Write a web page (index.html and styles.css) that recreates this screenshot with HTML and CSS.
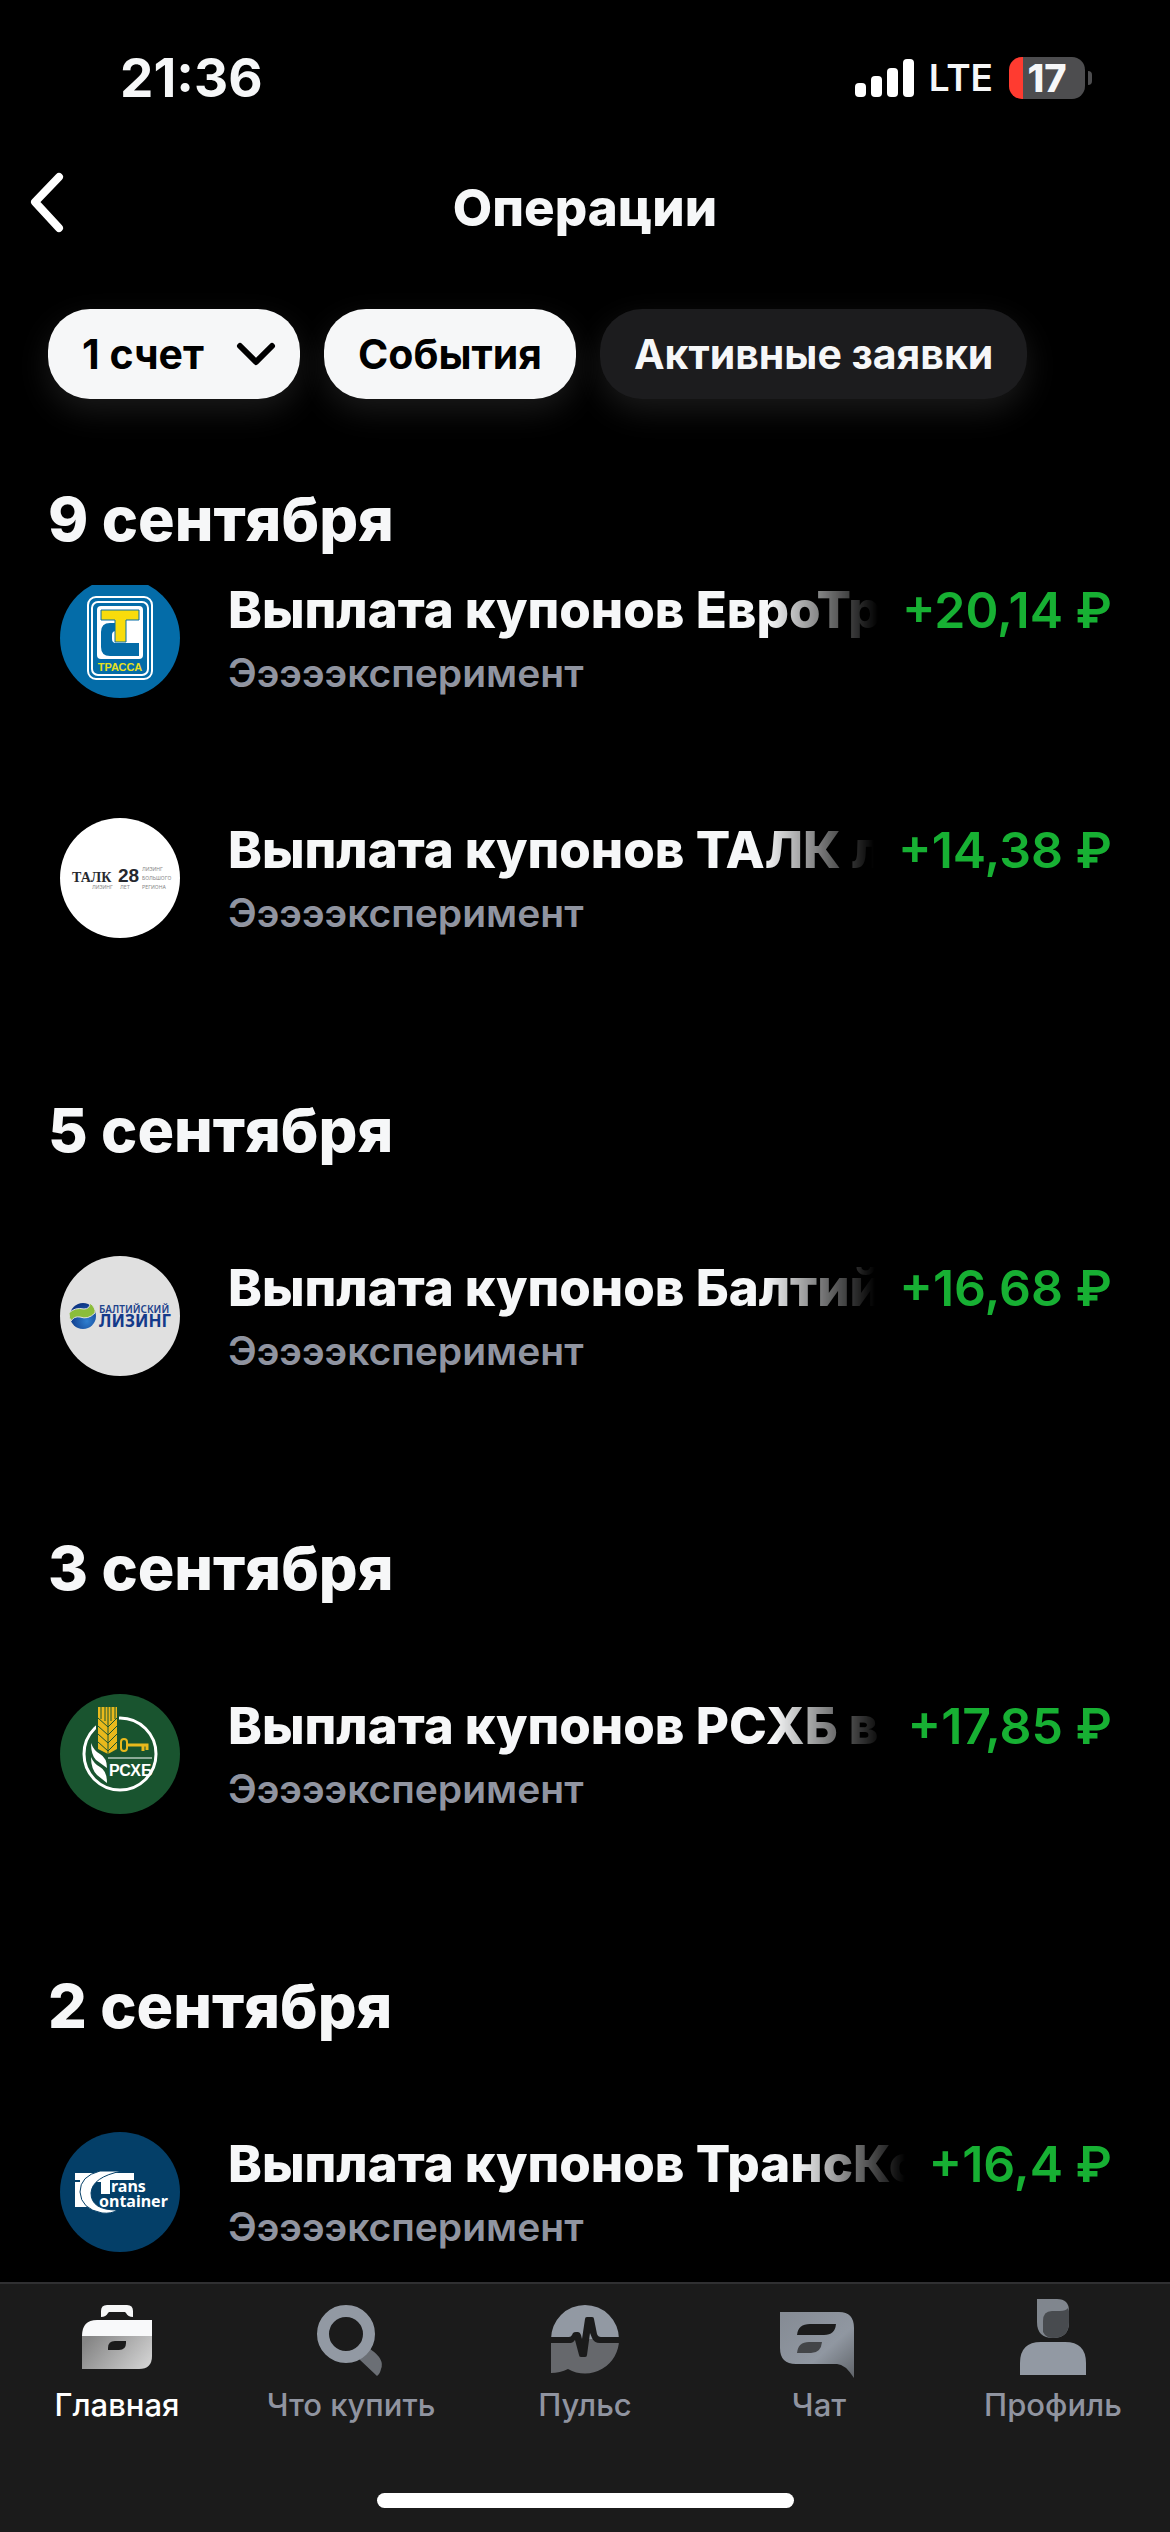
FILE: index.html
```html
<!DOCTYPE html>
<html lang="ru">
<head>
<meta charset="utf-8">
<meta name="viewport" content="width=device-width, initial-scale=1">
<title>Операции</title>
<link rel="stylesheet" href="styles.css">
</head>
<body>
<div class="app">
  <div class="status">
    <time class="status-time">21:36</time>
    <div class="status-right">
      <svg class="signal" viewBox="0 0 60 40" aria-hidden="true">
        <rect x="0" y="25" width="11" height="14" rx="4"/>
        <rect x="16" y="18" width="11" height="21" rx="4"/>
        <rect x="32" y="10" width="11" height="29" rx="4"/>
        <rect x="48" y="1" width="11" height="38" rx="4"/>
      </svg>
      <span class="network">LTE</span>
      <div class="battery"><span class="battery-body">17</span><span class="battery-nub"></span></div>
    </div>
  </div>

  <header class="header">
    <button class="back" type="button" aria-label="Назад">
      <svg viewBox="0 0 40 64" width="40" height="64"><path d="M32 6 8 31 32 57" fill="none" stroke="#fff" stroke-width="8" stroke-linecap="round" stroke-linejoin="round"/></svg>
    </button>
    <h1 class="title">Операции</h1>
  </header>

  <div class="filters">
    <button class="chip chip-on" type="button">1 счет
      <svg viewBox="0 0 40 26" width="40" height="26"><path d="M4 5 20 21 36 5" fill="none" stroke="#000" stroke-width="6" stroke-linecap="round" stroke-linejoin="round"/></svg>
    </button>
    <button class="chip chip-on" type="button">События</button>
    <button class="chip" type="button">Активные заявки</button>
  </div>

  <h2 class="day day-pinned">9 сентября</h2>

  <main class="feed">
    <div class="feed-scroll">
      <article class="row">
        <svg class="logo" viewBox="0 0 120 120" role="img" aria-label="ЕвроТранс">
          <circle cx="60" cy="60" r="60" fill="#046ca8"/>
          <rect x="28" y="19" width="64" height="82" rx="8" fill="none" stroke="#fff" stroke-width="2"/>
          <rect x="32" y="24" width="56" height="73" rx="6" fill="none" stroke="#fff" stroke-width="2"/>
          <rect x="37" y="28" width="46" height="53" rx="4" fill="#fff"/>
          <path d="M79 45H50q-9 0-9 9v15q0 9 9 9h29V65H56q-4 0-4-4v-4q0-4 4-4h23z" fill="#046ca8"/>
          <path d="M66 44h14v9H66z" fill="#fff"/>
          <path d="M41 32h38v10H66v22H55V42H41z" fill="#f8dc0c" stroke="#046ca8" stroke-width="1"/>
          <text x="60" y="93" text-anchor="middle" class="t-sans" font-size="11" fill="#e8e020">ТРАССА</text>
        </svg>
        <div class="row-text">
          <div class="row-line"><span class="name">Выплата купонов ЕвроТр</span><span class="sum">+20,14 ₽</span></div>
          <p class="account">Эээээксперимент</p>
        </div>
      </article>
      <article class="row">
        <svg class="logo" viewBox="0 0 120 120" role="img" aria-label="ТАЛК лизинг">
          <circle cx="60" cy="60" r="60" fill="#fff"/>
          <text x="12" y="64" class="t-serif" font-size="14" fill="#26282e">ТАЛК</text>
          <text x="32" y="71" class="t-thin" font-size="5" fill="#888">ЛИЗИНГ</text>
          <text x="58" y="64" class="t-sans" font-size="19" fill="#26282e">28</text>
          <text x="60" y="71" class="t-thin" font-size="5" fill="#888">ЛЕТ</text>
          <text x="82" y="53" class="t-thin" font-size="5" fill="#888">ЛИЗИНГ</text>
          <text x="82" y="62" class="t-thin" font-size="5" fill="#888">БОЛЬШОГО</text>
          <text x="82" y="71" class="t-thin" font-size="5" fill="#888">РЕГИОНА</text>
        </svg>
        <div class="row-text">
          <div class="row-line"><span class="name">Выплата купонов ТАЛК л</span><span class="sum">+14,38 ₽</span></div>
          <p class="account">Эээээксперимент</p>
        </div>
      </article>

      <h2 class="day">5 сентября</h2>
      <article class="row">
        <svg class="logo" viewBox="0 0 120 120" role="img" aria-label="Балтийский лизинг">
          <defs><radialGradient id="globe" cx=".65" cy=".7" r=".7"><stop offset="0" stop-color="#2f7fd0"/><stop offset="1" stop-color="#0d3584"/></radialGradient></defs>
          <circle cx="60" cy="60" r="60" fill="#e0e0e0"/>
          <circle cx="23" cy="60" r="13" fill="url(#globe)"/>
          <path d="M9 57Q15 51 24 53 30 53 30 47 36 52 35 57 28 64 20 61 14 60 11 65 9 62 9 57z" fill="#8bbd3a" stroke="#e0e0e0" stroke-width="1"/>
          <text x="39" y="57" class="t-noto" font-size="10" fill="#20438c">БАЛТИЙСКИЙ</text>
          <text x="39" y="71" class="t-notob" font-size="17" fill="#143a8a">ЛИЗИНГ</text>
        </svg>
        <div class="row-text">
          <div class="row-line"><span class="name">Выплата купонов Балтий</span><span class="sum">+16,68 ₽</span></div>
          <p class="account">Эээээксперимент</p>
        </div>
      </article>

      <h2 class="day">3 сентября</h2>
      <article class="row">
        <svg class="logo" viewBox="0 0 120 120" role="img" aria-label="РСХБ">
          <circle cx="60" cy="60" r="60" fill="#19542f"/>
          <circle cx="60" cy="60" r="36" fill="none" stroke="#fff" stroke-width="3"/>
          <path d="M36 12h23v45l-11 6-12-6z" fill="#19542f"/>
          <path d="M38 13h19v42l-9 5-10-5z" fill="#e9b91c"/>
          <path d="M41 13v12M45 13v14M51 13v14M55 13v12" stroke="#19542f" stroke-width="1"/>
          <path d="M48 13v47M38 24l10 9 9-9M38 32l10 9 9-9M38 40l10 9 9-9M38 48l10 9 9-9" fill="none" stroke="#19542f" stroke-width="1"/>
          <path d="M31 49Q34 57 40 60 47 64 47 74L36 66Q31 61 31 49zM31 63Q34 70 40 73 47 77 47 89L37 81Q31 75 31 63z" fill="#fff"/>
          <path d="M67 51h20v5M83 51v6" fill="none" stroke="#e9b91c" stroke-width="3"/>
          <rect x="61" y="45" width="6" height="12" rx="3" fill="none" stroke="#e9b91c" stroke-width="2"/>
          <path d="M48 64h44" stroke="#fff" stroke-width="1"/>
          <text x="49" y="82" class="t-sans" font-size="16" fill="#fff">РСХБ</text>
        </svg>
        <div class="row-text">
          <div class="row-line"><span class="name">Выплата купонов РСХБ в</span><span class="sum">+17,85 ₽</span></div>
          <p class="account">Эээээксперимент</p>
        </div>
      </article>

      <h2 class="day">2 сентября</h2>
      <article class="row">
        <svg class="logo" viewBox="0 0 120 120" role="img" aria-label="ТрансКонтейнер">
          <circle cx="60" cy="60" r="60" fill="#043f68"/>
          <path d="M15 41h59v7H50v14h-9V50H28v25H15V50h5v-2h-5z" fill="#fff"/>
          <path d="M62 39H40Q20 44 20 60 21 77 42 81 52 82 57 78 31 78 31 61 32 45 62 39z" fill="#fff" stroke="#043f68" stroke-width="1"/>
          <text x="51" y="60" class="t-notob" font-size="16" fill="#fff">rans</text>
          <text x="39" y="75" class="t-notob" font-size="16" fill="#fff">ontainer</text>
        </svg>
        <div class="row-text">
          <div class="row-line"><span class="name">Выплата купонов ТрансКо</span><span class="sum">+16,4 ₽</span></div>
          <p class="account">Эээээксперимент</p>
        </div>
      </article>
    </div>
  </main>

  <footer class="dock">
    <nav class="tabs">
      <a class="tab tab-active" href="#home">
        <svg viewBox="0 0 96 96" width="96" height="96" aria-hidden="true">
          <defs><linearGradient id="case" x1="0" y1=".3" x2="1" y2=".7"><stop offset="0" stop-color="#858585"/><stop offset="1" stop-color="#d0d0d0"/></linearGradient></defs>
          <path d="M32 25v-6q0-6 6-6h20q6 0 6 6v6q-5 0-7-4l-1-1H40l-1 1q-2 4-7 4z" fill="#f6f7f8"/>
          <path d="M13 44q0-16 15-16h55v16z" fill="#f8f9fa"/>
          <path d="M13 44h70v20q0 13-13 13H13z" fill="url(#case)"/>
          <path d="M39 58v-2q0-7 7-7h11v2q0 7-7 7z" fill="#1b1b1b"/>
        </svg>Главная</a>
      <a class="tab" href="#buy">
        <svg viewBox="0 0 96 96" width="96" height="96" aria-hidden="true">
          <path d="M56 67 67 57Q82 67 78 77q-1 5-4 7z" fill="#6b6f75"/>
          <circle cx="43" cy="42" r="23" fill="none" stroke="#9299a3" stroke-width="12"/>
        </svg>Что купить</a>
      <a class="tab" href="#pulse">
        <svg viewBox="0 0 96 96" width="96" height="96" aria-hidden="true">
          <path d="M14 47a34 34 0 0 1 68 0z" fill="#9299a3"/>
          <path d="M14 47h68a34 34 0 0 1-51 30q-8 4-17 4z" fill="#66686c"/>
          <path d="M14 45h18q2 0 3-2l1-2q1-1 3-1h2q2 0 3 3l1 4 3-20q0-2 2-2h5q2 0 2 2l3 15q1 3 4 3h18v6H63q-6 0-8-5l-2-5-3 22q0 2-2 2h-4q-2 0-2-2l-4-15-1 1q-1 2-5 2H14z" fill="#1b1b1b"/>
        </svg>Пульс</a>
      <a class="tab" href="#chat">
        <svg viewBox="0 0 96 96" width="96" height="96" aria-hidden="true">
          <defs><linearGradient id="bubble" x1="0" y1="0" x2="1" y2="1"><stop offset="0" stop-color="#858b94"/><stop offset=".6" stop-color="#9097a1"/><stop offset="1" stop-color="#606469"/></linearGradient></defs>
          <path d="M9 20h59q15 0 15 16v50Q74 72 66 72H25Q9 72 9 56z" fill="url(#bubble)"/>
          <path d="M26 43q1-11 13-11h26q-1 11-12 11z" fill="#1b1b1b"/>
          <path d="M26 61q1-11 12-11h13q-1 11-11 11z" fill="#434548"/>
        </svg>Чат</a>
      <a class="tab" href="#profile">
        <svg viewBox="0 0 96 96" width="96" height="96" aria-hidden="true">
          <path d="M32 7h20q12 0 12 12v11q0 16-16 16T32 30z" fill="#80868e"/>
          <path d="M38 29q0-10 9-10h8q6 0 8-3l1 3v11q0 16-16 16-7 0-10-6z" fill="#484b4f"/>
          <path d="M15 83V71q0-21 21-21h24q21 0 21 21v12z" fill="#9299a3"/>
        </svg>Профиль</a>
    </nav>
    <div class="home-bar"></div>
  </footer>
</div>
</body>
</html>
```
FILE: styles.css
```css
* { box-sizing: border-box; }

body {
  margin: 0;
  background: #000;
  color: #f6f7f8;
  font-family: Inter, "Liberation Sans", sans-serif;
}

.app {
  display: flex;
  flex-direction: column;
  height: 100vh;
  overflow: hidden;
}

h1, h2, p { margin: 0; }

button {
  border: 0;
  padding: 0;
  background: none;
  color: inherit;
  font: inherit;
}

/* Status bar */
.status {
  display: flex;
  align-items: center;
  justify-content: space-between;
  height: 156px;
  padding: 0 78px 0 120px;
}
.status-time { font-size: 53px; font-weight: 700; line-height: 60px; }
.status-right { display: flex; align-items: center; }
.signal { width: 60px; height: 40px; fill: #fff; margin-right: 14px; }
.network { font-size: 37px; font-weight: 600; line-height: 48px; margin-right: 16px; }
.battery { display: flex; align-items: center; gap: 3px; }
.battery-body {
  width: 76px;
  height: 42px;
  border-radius: 13px;
  background: linear-gradient(90deg, #ff3b30 14px, #4d4d4f 14px);
  font-size: 38px;
  font-weight: 800;
  line-height: 42px;
  text-align: center;
}
.battery-nub { width: 4px; height: 14px; border-radius: 0 4px 4px 0; background: #4d4d4f; }

/* Navigation header */
.header {
  display: grid;
  grid-template-columns: 96px 1fr 96px;
  align-items: center;
  height: 104px;
}
.back { display: flex; padding: 0 0 10px 27px; }
.title { font-size: 51px; font-weight: 800; line-height: 60px; text-align: center; }

/* Filter chips */
.filters {
  display: flex;
  gap: 24px;
  padding: 49px 48px 0;
}
.chip {
  display: flex;
  align-items: center;
  gap: 32px;
  height: 90px;
  padding: 0 34px;
  border-radius: 42px;
  background: #1c1c1e;
  box-shadow: 0 12px 32px rgba(255, 255, 255, .1);
  font-size: 41px;
  font-weight: 700;
  white-space: nowrap;
}
.chip-on { background: #f6f7f8; color: #000; }
.chip svg { margin-right: -10px; }

/* Day headings */
.day {
  display: flex;
  align-items: center;
  height: 198px;
  padding: 0 48px;
  font-size: 61px;
  font-weight: 800;
  line-height: 72px;
}
.day-pinned { height: 186px; padding-top: 54px; }
.feed .day { padding-top: 66px; }

/* Operations */
.feed { flex: 1; min-height: 0; overflow: hidden; }
.feed-scroll { margin-top: -67px; }
.row {
  display: flex;
  align-items: center;
  gap: 48px;
  height: 240px;
  padding: 0 58px 0 60px;
}
.logo { flex: none; width: 120px; height: 120px; }
.row-text { flex: 1; min-width: 0; }
.row-line {
  display: flex;
  gap: 24px;
  font-size: 51px;
  line-height: 60px;
  white-space: nowrap;
}
.name {
  flex: 1;
  min-width: 0;
  overflow: hidden;
  font-weight: 800;
  -webkit-mask-image: linear-gradient(90deg, #000 calc(100% - 110px), transparent);
  mask-image: linear-gradient(90deg, #000 calc(100% - 110px), transparent);
}
.sum { font-size: 50px; font-weight: 600; color: #17b033; }
.account {
  padding-top: 9px;
  font-size: 39px;
  font-weight: 600;
  line-height: 48px;
  color: #9094a0;
}

/* Lettering inside company logos */
.t-sans { font-family: "Liberation Sans", sans-serif; font-weight: 700; }
.t-serif { font-family: "Liberation Serif", serif; font-weight: 700; }
.t-thin { font-family: Inter, sans-serif; font-weight: 400; }
.t-noto { font-family: "Noto Sans", sans-serif; font-weight: 600; }
.t-notob { font-family: "Noto Sans", sans-serif; font-weight: 700; }

/* Bottom tab bar */
.dock {
  display: flex;
  flex-direction: column;
  align-items: center;
  height: 250px;
  border-top: 2px solid #303032;
  background: #1b1b1b;
}
.tabs { display: flex; width: 100%; padding-top: 8px; }
.tab {
  display: flex;
  flex: 1;
  flex-direction: column;
  align-items: center;
  color: #9094a0;
  font-size: 31px;
  font-weight: 500;
  line-height: 34px;
  text-decoration: none;
  white-space: nowrap;
}
.tab-active { color: #fff; }
.home-bar {
  width: 417px;
  height: 15px;
  margin: auto 0 24px;
  border-radius: 8px;
  background: #fff;
}
```
